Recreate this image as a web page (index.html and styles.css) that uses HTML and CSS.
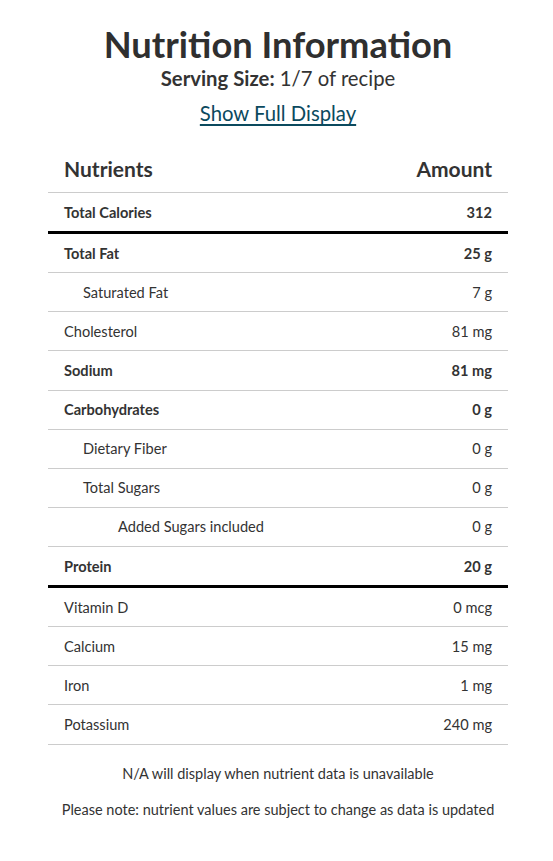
FILE: index.html
```html
<!DOCTYPE html>
<html lang="en">
<head>
<meta charset="utf-8">
<title>Nutrition Information</title>
<link rel="stylesheet" href="styles.css">
</head>
<body>
<main class="panel">
  <h1 class="title">Nutrition Information</h1>
  <p class="serving"><strong>Serving Size:</strong> 1/7 of recipe</p>
  <p class="toggle"><a href="#" class="toggle-link">Show Full Display</a></p>
  <div class="table">
    <div class="row head"><span>Nutrients</span><span>Amount</span></div>
    <div class="row bold thick"><span>Total Calories</span><span>312</span></div>
    <div class="row bold"><span>Total Fat</span><span>25 g</span></div>
    <div class="row ind1"><span>Saturated Fat</span><span>7 g</span></div>
    <div class="row"><span>Cholesterol</span><span>81 mg</span></div>
    <div class="row bold"><span>Sodium</span><span>81 mg</span></div>
    <div class="row bold"><span>Carbohydrates</span><span>0 g</span></div>
    <div class="row ind1"><span>Dietary Fiber</span><span>0 g</span></div>
    <div class="row ind1"><span>Total Sugars</span><span>0 g</span></div>
    <div class="row ind2"><span>Added Sugars included</span><span>0 g</span></div>
    <div class="row bold thick"><span>Protein</span><span>20 g</span></div>
    <div class="row"><span>Vitamin D</span><span>0 mcg</span></div>
    <div class="row"><span>Calcium</span><span>15 mg</span></div>
    <div class="row"><span>Iron</span><span>1 mg</span></div>
    <div class="row"><span>Potassium</span><span>240 mg</span></div>
  </div>
  <p class="note first">N/A will display when nutrient data is unavailable</p>
  <p class="note">Please note: nutrient values are subject to change as data is updated</p>
</main>
</body>
</html>
```
FILE: styles.css
```css
* { box-sizing: border-box; }
html, body { margin: 0; padding: 0; background: #fff; }
body {
  font-family: Lato, "Open Sans", Arial, sans-serif;
  color: #333;
}
.panel {
  width: 460px;
  margin: 0 0 0 48px;
  padding-top: 22px;
}
.title {
  margin: 0;
  font-size: 36.3px;
  line-height: 44px;
  font-weight: 700;
  text-align: center;
  color: #2f2f2f;
}
.serving {
  margin: 0;
  font-size: 20.3px;
  line-height: 24px;
  text-align: center;
}
.serving strong { font-weight: 700; }
.toggle {
  margin: 11px 0 0;
  font-size: 20.3px;
  line-height: 24px;
  text-align: center;
}
.toggle-link { color: #0b4a5e; text-decoration: underline; text-underline-offset: 3px; }
.table { margin-top: 19px; }
.row {
  display: flex;
  justify-content: space-between;
  align-items: center;
  height: 39.14px;
  padding: 0 16px;
  border-bottom: 1px solid #ccc;
  font-size: 14.6px;
}
.row.head {
  height: 49px;
  font-size: 21px;
  font-weight: 700;
  padding-top: 1px;
}
.row.bold { font-weight: 700; }
.row.thick { height: 41px; border-bottom: 3px solid #000; }
.row.ind1 span:first-child { padding-left: 19px; }
.row.ind2 span:first-child { padding-left: 54px; }
.note {
  margin: 0;
  text-align: center;
  font-size: 14.5px;
  line-height: 18px;
}
.note.first { margin-top: 20px; }
.note + .note { margin-top: 18px; }
```
